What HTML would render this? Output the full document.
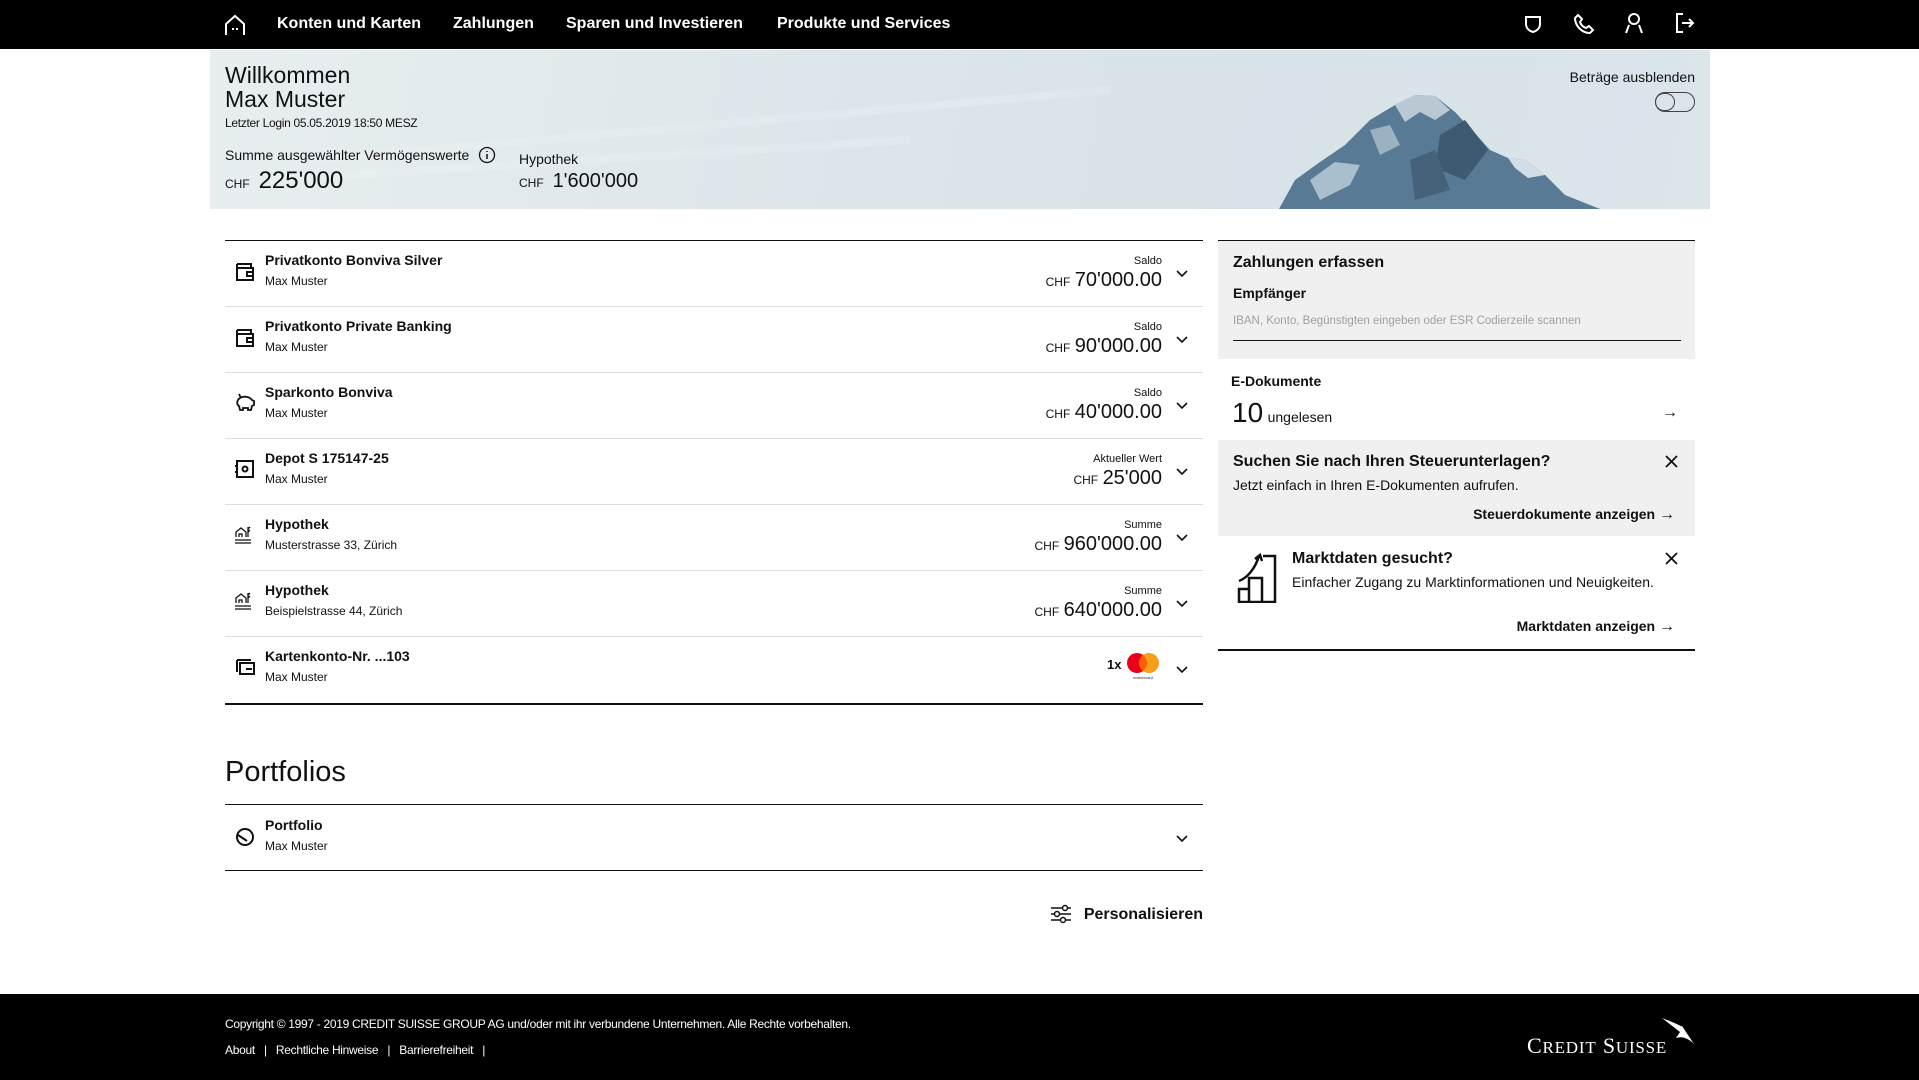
<!DOCTYPE html>
<html><head><meta charset="utf-8"><style>
*{margin:0;padding:0;box-sizing:border-box}
body{width:1919px;height:1080px;position:relative;font-family:"Liberation Sans",Arial,sans-serif;color:#111;background:#fff;overflow:hidden}
.a{position:absolute;white-space:nowrap}
.nav{position:absolute;left:0;top:0;width:1919px;height:49px;background:#000}
.nav .t{color:#fff;font-weight:bold;font-size:16px;top:15px}
.hero{position:absolute;left:210px;top:50px;width:1500px;height:159px;background:linear-gradient(100deg,#e8eef0 0%,#dde6ea 40%,#d7e3e8 70%,#dbe5ea 100%);overflow:hidden}
.line{position:absolute;height:1px;background:#ddd}
.bk{position:absolute;background:#111}
.row .tt{font-weight:bold;font-size:14px}
.sm{font-size:12px}
.lbl{font-size:11px;text-align:right}
.amt{font-size:20px}
.chf{font-size:12px}
.gray{position:absolute;background:#f0f0f0}
.ft{color:#fff;font-size:12px}
.arr{font-weight:bold}
</style></head><body>
<div class="nav">
<svg class="a" style="left:224px;top:14px" width="22" height="22" viewBox="0 0 22 22" fill="none" stroke="#fff" stroke-width="2"><path d="M2 21V10L11 2l9 8v11"/><path d="M9 14v2M13 14v2"/></svg>
<div class="a t" style="left:277px">Konten und Karten</div>
<div class="a t" style="left:453px">Zahlungen</div>
<div class="a t" style="left:566px">Sparen und Investieren</div>
<div class="a t" style="left:777px">Produkte und Services</div>
<svg class="a" style="left:1524px;top:14px" width="18" height="20" viewBox="0 0 18 20" fill="none" stroke="#fff" stroke-width="2"><path d="M2 3h14v7c0 4-3 7-7 8-4-1-7-4-7-8z"/></svg>
<svg class="a" style="left:1573px;top:13px" width="22" height="22" viewBox="0 0 22 22" fill="none" stroke="#fff" stroke-width="2"><path d="M5 2l4 4-2 3c1 3 3 5 6 6l3-2 4 4-3 3C9 20 2 13 2 5z"/></svg>
<svg class="a" style="left:1624px;top:12px" width="20" height="22" viewBox="0 0 20 22" fill="none" stroke="#fff" stroke-width="2"><circle cx="10" cy="7" r="5"/><path d="M2 21l3-8M18 21l-3-8"/></svg>
<svg class="a" style="left:1675px;top:12px" width="20" height="22" viewBox="0 0 20 22" fill="none" stroke="#fff" stroke-width="2"><path d="M8 2H2v18h6M7 11h11M14 7l4 4-4 4"/></svg>
</div>

<div class="hero">
<svg class="a" style="left:0;top:0" width="1500" height="159"><g stroke="#fff" stroke-opacity=".15" stroke-width="8" fill="none"><path d="M100 110 L900 40"/><path d="M60 130 L700 90"/></g>
<path d="M1069 159 L1085 130 L1110 112 L1135 95 L1160 70 L1185 55 L1205 45 L1225 46 L1245 62 L1262 80 L1280 100 L1298 108 L1315 110 L1335 125 L1355 145 L1390 159Z" fill="#587a94"/>
<path d="M1185 55 L1205 45 L1225 46 L1240 60 L1225 70 L1210 62 L1195 72Z" fill="#b8c8d4"/>
<path d="M1100 130 L1125 112 L1150 115 L1140 135 L1110 150Z" fill="#a9bfcd"/>
<path d="M1160 80 L1180 75 L1190 95 L1170 105Z" fill="#9bb2c3"/>
<path d="M1298 108 L1315 110 L1335 125 L1318 128 L1305 118Z" fill="#d2dee6"/>
<path d="M1230 85 L1255 70 L1278 100 L1255 130 L1225 118Z" fill="#3e5a70"/>
<path d="M1200 110 L1225 100 L1240 140 L1205 150Z" fill="#46627a"/></svg>
<div class="a" style="left:15px;top:12px;font-size:23px">Willkommen</div>
<div class="a" style="left:15px;top:36px;font-size:23px">Max Muster</div>
<div class="a" style="left:15px;top:66px;font-size:12px;letter-spacing:-.3px">Letzter Login 05.05.2019 18:50 MESZ</div>
<div class="a" style="left:15px;top:97px;font-size:14px">Summe ausgewählter Vermögenswerte</div>
<svg class="a" style="left:268px;top:96px" width="18" height="18"><circle cx="9" cy="9" r="7.5" fill="none" stroke="#111" stroke-width="1.3"/><path d="M9 8v5M9 5v1" stroke="#111" stroke-width="1.5"/></svg>
<div class="a" style="left:15px;top:117px"><span style="font-size:12px">CHF</span>&nbsp;&nbsp;<span style="font-size:24px">225'000</span></div>
<div class="a" style="left:309px;top:101px;font-size:14px">Hypothek</div>
<div class="a" style="left:309px;top:120px"><span style="font-size:12px">CHF</span>&nbsp;&nbsp;<span style="font-size:20px">1'600'000</span></div>
<div class="a" style="right:15px;top:19px;font-size:14px">Beträge ausblenden</div>
<div class="a" style="left:1445px;top:42px;width:40px;height:20px;border:1px solid #444;border-radius:10px"><div style="width:20px;height:18px;border:1px solid #444;border-radius:10px;margin-left:-1px"></div></div>
</div>

<!-- accounts -->
<div class="bk" style="left:225px;top:240px;width:978px;height:1px"></div>
<div class="line" style="left:225px;top:306px;width:978px"></div>
<div class="line" style="left:225px;top:372px;width:978px"></div>
<div class="line" style="left:225px;top:438px;width:978px"></div>
<div class="line" style="left:225px;top:504px;width:978px"></div>
<div class="line" style="left:225px;top:570px;width:978px"></div>
<div class="line" style="left:225px;top:636px;width:978px"></div>
<div class="bk" style="left:225px;top:703px;width:978px;height:2px"></div>

<svg class="a" style="left:234px;top:261px" width="22" height="22" viewBox="0 0 22 22" fill="none" stroke="#111" stroke-width="2"><path d="M3 3h14v4M3 3v16h16V7H3M19 11h-6v4h6"/></svg>
<svg class="a" style="left:234px;top:327px" width="22" height="22" viewBox="0 0 22 22" fill="none" stroke="#111" stroke-width="2"><path d="M3 3h14v4M3 3v16h16V7H3M19 11h-6v4h6"/></svg>
<svg class="a" style="left:234px;top:392px" width="22" height="22" viewBox="0 0 22 22" fill="none" stroke="#111" stroke-width="1.8"><path d="M6 6c3-2 9-2 12 2l2 1v4l-2 1-1 4h-3v-2H9v2H6l-1-4c-3-2-2-6 1-8zM5 2l2 4"/></svg>
<svg class="a" style="left:234px;top:458px" width="22" height="22" viewBox="0 0 22 22" fill="none" stroke="#111" stroke-width="2"><rect x="3" y="3" width="16" height="16"/><circle cx="11" cy="11" r="2.5"/><path d="M1 8h3M1 14h3"/></svg>
<svg class="a" style="left:234px;top:524px" width="20" height="22" viewBox="0 0 20 22" fill="none" stroke="#111" stroke-width="1.3"><path d="M2 13V8l5-4 5 4v5M5 13v-3h3v3M14 3v10M14 5l2-2M14 8l2-2M1 16h16M1 19h16"/></svg>
<svg class="a" style="left:234px;top:590px" width="20" height="22" viewBox="0 0 20 22" fill="none" stroke="#111" stroke-width="1.3"><path d="M2 13V8l5-4 5 4v5M5 13v-3h3v3M14 3v10M14 5l2-2M14 8l2-2M1 16h16M1 19h16"/></svg>
<svg class="a" style="left:234px;top:656px" width="22" height="22" viewBox="0 0 22 22" fill="none" stroke="#111" stroke-width="2"><path d="M3 4h14M3 4v12M6 7h14v11H6zM12 13h6"/></svg>

<div class="row">
<div class="a tt" style="left:265px;top:252px">Privatkonto Bonviva Silver</div><div class="a sm" style="left:265px;top:274px">Max Muster</div>
<div class="a lbl" style="right:757px;top:255px">Saldo</div><div class="a" style="right:757px;top:269px"><span class="chf">CHF</span> <span class="amt">70'000.00</span></div>
<div class="a tt" style="left:265px;top:318px">Privatkonto Private Banking</div><div class="a sm" style="left:265px;top:340px">Max Muster</div>
<div class="a lbl" style="right:757px;top:321px">Saldo</div><div class="a" style="right:757px;top:335px"><span class="chf">CHF</span> <span class="amt">90'000.00</span></div>
<div class="a tt" style="left:265px;top:384px">Sparkonto Bonviva</div><div class="a sm" style="left:265px;top:406px">Max Muster</div>
<div class="a lbl" style="right:757px;top:387px">Saldo</div><div class="a" style="right:757px;top:401px"><span class="chf">CHF</span> <span class="amt">40'000.00</span></div>
<div class="a tt" style="left:265px;top:450px">Depot S 175147-25</div><div class="a sm" style="left:265px;top:472px">Max Muster</div>
<div class="a lbl" style="right:757px;top:453px">Aktueller Wert</div><div class="a" style="right:757px;top:467px"><span class="chf">CHF</span> <span class="amt">25'000</span></div>
<div class="a tt" style="left:265px;top:516px">Hypothek</div><div class="a sm" style="left:265px;top:538px">Musterstrasse 33, Zürich</div>
<div class="a lbl" style="right:757px;top:519px">Summe</div><div class="a" style="right:757px;top:533px"><span class="chf">CHF</span> <span class="amt">960'000.00</span></div>
<div class="a tt" style="left:265px;top:582px">Hypothek</div><div class="a sm" style="left:265px;top:604px">Beispielstrasse 44, Zürich</div>
<div class="a lbl" style="right:757px;top:585px">Summe</div><div class="a" style="right:757px;top:599px"><span class="chf">CHF</span> <span class="amt">640'000.00</span></div>
<div class="a tt" style="left:265px;top:648px">Kartenkonto-Nr. ...103</div><div class="a sm" style="left:265px;top:670px">Max Muster</div>
<div class="a" style="left:1107px;top:657px;font-size:13px;font-weight:bold">1x</div>
<svg class="a" style="left:1124px;top:651px" width="40" height="30"><circle cx="13" cy="12" r="10" fill="#eb001b"/><circle cx="25" cy="12" r="10" fill="#f79e1b"/><path d="M19 4a10 10 0 0 1 0 16a10 10 0 0 1 0-16z" fill="#ff5f00"/><text x="19" y="28" font-size="4" text-anchor="middle" fill="#333">mastercard</text></svg>
</div>
<svg class="a" style="left:1175px;top:269px" width="14" height="350" fill="none" stroke="#111" stroke-width="1.6"><path d="M2 2l5 5 5-5"/><path d="M2 68l5 5 5-5"/><path d="M2 134l5 5 5-5"/><path d="M2 200l5 5 5-5"/><path d="M2 266l5 5 5-5"/><path d="M2 332l5 5 5-5"/></svg>
<svg class="a" style="left:1175px;top:665px" width="14" height="10" fill="none" stroke="#111" stroke-width="1.6"><path d="M2 2l5 5 5-5"/></svg>

<div class="a" style="left:225px;top:756px;font-size:29px">Portfolios</div>
<div class="bk" style="left:225px;top:804px;width:978px;height:1px"></div>
<div class="bk" style="left:225px;top:870px;width:978px;height:1px"></div>
<svg class="a" style="left:234px;top:826px" width="22" height="22" fill="none" stroke="#111" stroke-width="2"><circle cx="11" cy="11" r="8"/><path d="M4 9l9 6"/></svg>
<div class="a tt" style="left:265px;top:817px;font-weight:bold;font-size:14px">Portfolio</div><div class="a sm" style="left:265px;top:839px">Max Muster</div>
<svg class="a" style="left:1175px;top:834px" width="14" height="10" fill="none" stroke="#111" stroke-width="1.6"><path d="M2 2l5 5 5-5"/></svg>
<svg class="a" style="left:1050px;top:903px" width="22" height="22" fill="none" stroke="#111" stroke-width="1.5"><path d="M1 5h20M1 11h20M1 17h20"/><circle cx="15" cy="5" r="2.5" fill="#fff"/><circle cx="7" cy="11" r="2.5" fill="#fff"/><circle cx="13" cy="17" r="2.5" fill="#fff"/></svg>
<div class="a" style="right:716px;top:906px;font-size:16px;font-weight:bold">Personalisieren</div>

<!-- right column -->
<div class="bk" style="left:1218px;top:240px;width:477px;height:1px"></div>
<div class="gray" style="left:1218px;top:241px;width:477px;height:118px"></div>
<div class="a" style="left:1233px;top:254px;font-size:16px;font-weight:bold">Zahlungen erfassen</div>
<div class="a" style="left:1233px;top:285px;font-size:14px;font-weight:bold">Empfänger</div>
<div class="a" style="left:1233px;top:315px;font-size:11.5px;color:#a0a0a0">IBAN, Konto, Begünstigten eingeben oder ESR Codierzeile scannen</div>
<div class="bk" style="left:1233px;top:340px;width:448px;height:1px"></div>
<div class="a" style="left:1231px;top:373px;font-size:14px;font-weight:bold">E-Dokumente</div>
<div class="a" style="left:1232px;top:397px"><span style="font-size:28px">10</span> <span style="font-size:14px">ungelesen</span></div>
<div class="a arr" style="left:1662px;top:404px;font-size:16px">→</div>
<div class="gray" style="left:1218px;top:440px;width:477px;height:96px"></div>
<div class="a" style="left:1233px;top:453px;font-size:16px;font-weight:bold">Suchen Sie nach Ihren Steuerunterlagen?</div>
<div class="a" style="left:1233px;top:477px;font-size:14px">Jetzt einfach in Ihren E-Dokumenten aufrufen.</div>
<div class="a" style="right:244px;top:506px;font-size:14px;font-weight:bold">Steuerdokumente anzeigen <span style="font-size:16px">→</span></div>
<svg class="a" style="left:1665px;top:455px" width="13" height="13" stroke="#111" stroke-width="1.8"><path d="M1 1l11 11M12 1L1 12"/></svg>
<svg class="a" style="left:1236px;top:551px" width="42" height="52" fill="none" stroke="#111" stroke-width="2.5"><path d="M27 5h12v46H3V38h10v13M13 51V27h13v24"/><path d="M3 30c8-3 16-12 20-25M19 8l5-4 2 6"/></svg>
<div class="a" style="left:1292px;top:550px;font-size:16px;font-weight:bold">Marktdaten gesucht?</div>
<div class="a" style="left:1292px;top:574px;font-size:14px">Einfacher Zugang zu Marktinformationen und Neuigkeiten.</div>
<svg class="a" style="left:1665px;top:552px" width="13" height="13" stroke="#111" stroke-width="1.8"><path d="M1 1l11 11M12 1L1 12"/></svg>
<div class="a" style="right:244px;top:618px;font-size:14px;font-weight:bold">Marktdaten anzeigen <span style="font-size:16px">→</span></div>
<div class="bk" style="left:1218px;top:649px;width:477px;height:2px"></div>

<!-- footer -->
<div style="position:absolute;left:0;top:994px;width:1919px;height:86px;background:#000"></div>
<div class="a ft" style="left:225px;top:1017px;letter-spacing:-.3px">Copyright © 1997 - 2019 CREDIT SUISSE GROUP AG und/oder mit ihr verbundene Unternehmen. Alle Rechte vorbehalten.</div>
<div class="a ft" style="left:225px;top:1043px;letter-spacing:-.3px">About &nbsp;&nbsp;|&nbsp;&nbsp; Rechtliche Hinweise &nbsp;&nbsp;|&nbsp;&nbsp; Barrierefreiheit &nbsp;&nbsp;|</div>
<div class="a" style="left:1527px;top:1033px;color:#fff;font-family:'Liberation Serif',serif;font-size:22px;letter-spacing:.8px">C<span style="font-size:17px">REDIT</span> S<span style="font-size:17px">UISSE</span></div>
<svg class="a" style="left:1660px;top:1016px" width="36" height="30"><path d="M2 2l20 8 12 18c-6-6-12-8-18-6l4-6z" fill="#fff"/><path d="M10 4l12 6" stroke="#000" stroke-width="1"/></svg>
</body></html>
